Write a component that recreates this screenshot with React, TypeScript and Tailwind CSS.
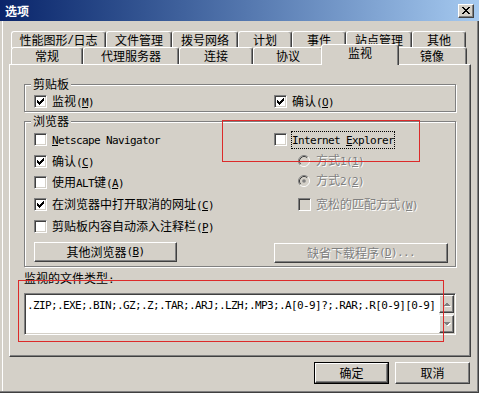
import React from "react";

const CJK = "font-['Noto_Sans_CJK_SC','Noto_Sans_CJK_JP',sans-serif]";
const MONO = "font-['DejaVu_Sans_Mono',monospace] text-[11px] tracking-[-0.62px]";
const DIS = "text-[#808080] [text-shadow:1px_1px_0_#ffffff]";
const RAISED =
  "border border-t-white border-l-white border-r-[#404040] border-b-[#404040] shadow-[inset_-1px_-1px_0_#808080]";
const SUNKEN =
  "border border-t-[#808080] border-l-[#808080] border-r-white border-b-white shadow-[inset_1px_1px_0_#404040,inset_-1px_-1px_0_#d4d0c8]";
const ETCHED = "border border-[#808080] shadow-[inset_1px_1px_0_#ffffff,1px_1px_0_#ffffff]";

function Txt({ s }: { s: string }) {
  const runs: { t: string; ascii: boolean; u: boolean }[] = [];
  let i = 0;
  while (i < s.length) {
    let ch = s[i];
    let u = false;
    if (ch === "&" && i + 1 < s.length) {
      u = true;
      i++;
      ch = s[i];
    }
    const ascii = ch.charCodeAt(0) < 128;
    const last = runs[runs.length - 1];
    if (last && last.ascii === ascii && !last.u && !u) last.t += ch;
    else runs.push({ t: ch, ascii, u });
    i++;
  }
  return (
    <>
      {runs.map((r, k) => (
        <span
          key={k}
          className={(r.ascii ? MONO : "") + (r.u ? " underline underline-offset-[1px]" : "")}
        >
          {r.t}
        </span>
      ))}
    </>
  );
}

const CHECK_PIXELS = ["......#", ".....##", "#...###", "##.###.", "#####..", ".###...", "..#...."];

function CheckMark() {
  const rects: React.ReactNode[] = [];
  CHECK_PIXELS.forEach((row, y) =>
    row.split("").forEach((c, x) => {
      if (c === "#") rects.push(<rect key={`${x}-${y}`} x={x} y={y} width={1} height={1} fill="#000" />);
    })
  );
  return (
    <svg width="7" height="7" viewBox="0 0 7 7" shapeRendering="crispEdges">
      {rects}
    </svg>
  );
}

function Check({ checked, disabled }: { checked?: boolean; disabled?: boolean }) {
  return (
    <div
      className={`w-[13px] h-[13px] shrink-0 flex items-center justify-center ${SUNKEN} ${
        disabled ? "bg-[#d4d0c8]" : "bg-white"
      }`}
    >
      {checked && <CheckMark />}
    </div>
  );
}

function Radio({ checked }: { checked?: boolean }) {
  return (
    <div className="w-[13px] h-[13px] shrink-0 flex items-center">
      <svg width="12" height="12" viewBox="0 0 12 12">
        <circle cx="6" cy="6" r="4.5" fill="#d4d0c8" />
        <path d="M2.11 9.89A5.5 5.5 0 0 1 9.89 2.11" stroke="#808080" fill="none" />
        <path d="M9.89 2.11A5.5 5.5 0 0 1 2.11 9.89" stroke="#ffffff" fill="none" />
        <path d="M2.82 9.18A4.5 4.5 0 0 1 9.18 2.82" stroke="#404040" fill="none" />
        <path d="M9.18 2.82A4.5 4.5 0 0 1 2.82 9.18" stroke="#d4d0c8" fill="none" />
        {checked && <circle cx="6" cy="6" r="1.8" fill="#808080" />}
      </svg>
    </div>
  );
}

function CheckRow({
  label,
  checked,
  disabled,
  focus,
  className = "",
}: {
  label: string;
  checked?: boolean;
  disabled?: boolean;
  focus?: boolean;
  className?: string;
}) {
  return (
    <div className={`flex items-center h-[13px] ${className}`}>
      <Check checked={checked} disabled={disabled} />
      <span
        className={`ml-[4px] border leading-[14px] whitespace-nowrap ${
          focus ? "border-dotted border-black" : "border-transparent"
        } ${disabled ? DIS : ""}`}
      >
        <Txt s={label} />
      </span>
    </div>
  );
}

function RadioRow({ label, checked, className = "" }: { label: string; checked?: boolean; className?: string }) {
  return (
    <div className={`flex items-center h-[13px] ${className}`}>
      <Radio checked={checked} />
      <span className={`ml-[4px] border border-transparent leading-[14px] whitespace-nowrap ${DIS}`}>
        <Txt s={label} />
      </span>
    </div>
  );
}

function Btn({
  label,
  className,
  disabled,
  def,
}: {
  label: string;
  className: string;
  disabled?: boolean;
  def?: boolean;
}) {
  const inner = (
    <div
      className={`${RAISED} w-full h-full flex items-center justify-center leading-[14px] whitespace-nowrap ${
        disabled ? DIS : ""
      }`}
    >
      <Txt s={label} />
    </div>
  );
  if (def) return <div className={`border border-black ${className}`}>{inner}</div>;
  return <div className={className}>{inner}</div>;
}

function CloseIcon() {
  const P = ["##....##", ".##..##.", "..####..", "...##...", "..####..", ".##..##.", "##....##"];
  const rects: React.ReactNode[] = [];
  P.forEach((row, y) =>
    row.split("").forEach((c, x) => {
      if (c === "#") rects.push(<rect key={`${x}-${y}`} x={x} y={y} width={1} height={1} fill="#000" />);
    })
  );
  return (
    <svg width="8" height="7" viewBox="0 0 8 7" shapeRendering="crispEdges">
      {rects}
    </svg>
  );
}

function Arrow({ up }: { up?: boolean }) {
  return (
    <svg width="8" height="5" viewBox="0 0 8 5" shapeRendering="crispEdges">
      {up ? (
        <>
          <path d="M1 5 L4.5 1.5 L8 5 Z" fill="#ffffff" />
          <path d="M0 4 L3.5 0.5 L7 4 Z" fill="#808080" />
        </>
      ) : (
        <>
          <path d="M1 1 L4.5 4.5 L8 1 Z" fill="#ffffff" />
          <path d="M0 0 L3.5 3.5 L7 0 Z" fill="#808080" />
        </>
      )}
    </svg>
  );
}

const ROW1: [string, string][] = [
  ["性能图形/日志", "w-[95px]"],
  ["文件管理", "w-[66px]"],
  ["拨号网络", "w-[66px]"],
  ["计划", "w-[54px]"],
  ["事件", "w-[54px]"],
  ["站点管理", "w-[66px]"],
  ["其他", "w-[54px]"],
];

const ROW2: [string, string, boolean][] = [
  ["常规", "w-[72px]", false],
  ["代理服务器", "w-[96px]", false],
  ["连接", "w-[74px]", false],
  ["协议", "w-[70px]", false],
  ["监视", "w-[78px]", true],
  ["镜像", "w-[70px]", false],
];

const TAB =
  "bg-[#d4d0c8] border-t border-l border-r border-t-white border-l-white border-r-[#404040] shadow-[inset_-1px_0_0_#808080] rounded-t-[3px] flex justify-center leading-[14px] whitespace-nowrap";

export default function App() {
  return (
    <div
      className={`relative w-[479px] h-[393px] bg-[#d4d0c8] flex flex-col text-[12px] text-black ${CJK} shadow-[inset_-1px_-1px_0_#404040,inset_-2px_-2px_0_#808080,inset_2px_0_0_#d4d0c8,inset_3px_0_0_#ffffff]`}
    >
      {/* Title bar */}
      <div className="h-[21px] shrink-0 bg-linear-to-r from-[#0a246a] to-[#a6caf0] flex items-center pl-[5px]">
        <span className="text-white font-bold leading-[14px]">选项</span>
        <div className={`ml-auto mr-[5px] w-[16px] h-[14px] bg-[#d4d0c8] ${RAISED} flex items-center justify-center`}>
          <CloseIcon />
        </div>
      </div>

      {/* Tabs */}
      <div className="mt-[10px] ml-[11px] flex flex-col">
        <div className="flex h-[16px]">
          {ROW1.map(([t, w]) => (
            <div key={t} className={`${TAB} ${w} h-[17px] items-center`}>
              <Txt s={t} />
            </div>
          ))}
        </div>
        <div className="flex h-[17px]">
          {ROW2.map(([t, w, sel]) =>
            sel ? (
              <div key={t} className={`${TAB} ${w} relative z-10 -mx-[2px] -mt-[3px] h-[21px] items-start pt-[1px]`}>
                <Txt s={t} />
              </div>
            ) : (
              <div key={t} className={`${TAB} ${w} h-[17px] items-center`}>
                <Txt s={t} />
              </div>
            )
          )}
        </div>
      </div>

      {/* Panel */}
      <div className="ml-[9px] w-[462px] h-[293px] shrink-0 border border-t-white border-l-white border-r-[#404040] border-b-[#404040] shadow-[inset_-1px_-1px_0_#808080] pt-[19px] pl-[14px] flex flex-col">
        {/* Clipboard group */}
        <div className={`relative w-[432px] h-[28px] shrink-0 ${ETCHED}`}>
          <div className="absolute -top-[8px] left-[6px] px-[2px] bg-[#d4d0c8] leading-[14px]">剪贴板</div>
          <div className="flex pt-[10px] pl-[9px]">
            <CheckRow className="w-[240px]" label="监视(&M)" checked />
            <CheckRow label="确认(&O)" checked />
          </div>
        </div>

        {/* Browser group */}
        <div className={`relative mt-[9px] w-[432px] h-[146px] shrink-0 ${ETCHED}`}>
          <div className="absolute -top-[8px] left-[6px] px-[2px] bg-[#d4d0c8] leading-[14px]">浏览器</div>
          <div className="flex pt-[11px] pl-[9px]">
            <div className="w-[240px] flex flex-col">
              <CheckRow label="&Netscape Navigator" />
              <CheckRow className="mt-[9px]" label="确认(&C)" checked />
              <CheckRow className="mt-[8px]" label="使用ALT键(&A)" />
              <CheckRow className="mt-[9px]" label="在浏览器中打开取消的网址(&C)" checked />
              <CheckRow className="mt-[9px]" label="剪贴板内容自动添入注释栏(&P)" />
              <Btn className="mt-[9px] w-[143px] h-[20px]" label="其他浏览器(&B)" />
            </div>
            <div className="flex flex-col">
              <CheckRow label="Internet &Explorer" focus />
              <RadioRow className="mt-[8px] ml-[24px]" label="方式1(&1)" />
              <RadioRow className="mt-[7px] ml-[24px]" label="方式2(&2)" checked />
              <CheckRow className="mt-[11px] ml-[24px]" label="宽松的匹配方式(&W)" disabled />
              <Btn className="mt-[32px] w-[174px] h-[20px]" label="缺省下载程序(&D)..." disabled />
            </div>
          </div>
        </div>

        {/* File types */}
        <div className="mt-[4px] leading-[14px]">
          <Txt s="监视的文件类型:" />
        </div>
        <div className={`mt-[6px] w-[432px] h-[42px] shrink-0 ${SUNKEN} p-[1px] flex`}>
          <div className="flex-1 bg-white pt-[2px] pl-[1px] leading-[14px] whitespace-nowrap overflow-hidden">
            <span className={MONO}>.ZIP;.EXE;.BIN;.GZ;.Z;.TAR;.ARJ;.LZH;.MP3;.A[0-9]?;.RAR;.R[0-9][0-9]</span>
          </div>
          <div className="w-[15px] flex flex-col bg-[#ebe9e5]">
            <div className={`h-[18px] bg-[#d4d0c8] ${RAISED} flex items-center justify-center`}>
              <Arrow up />
            </div>
            <div className="flex-1" />
            <div className={`h-[18px] bg-[#d4d0c8] ${RAISED} flex items-center justify-center`}>
              <Arrow />
            </div>
          </div>
        </div>
      </div>

      {/* Dialog buttons */}
      <div className="mt-[5px] flex justify-end gap-[6px] pr-[9px]">
        <Btn className="w-[75px] h-[22px]" label="确定" def />
        <Btn className="w-[75px] h-[22px]" label="取消" />
      </div>

      {/* Red annotation boxes */}
      <div className="pointer-events-none absolute left-[222px] top-[120px] w-[198px] h-[42px] border border-[#dc2a2a]" />
      <div className="pointer-events-none absolute left-[18px] top-[280px] w-[426px] h-[62px] border border-[#dc2a2a]" />
    </div>
  );
}
